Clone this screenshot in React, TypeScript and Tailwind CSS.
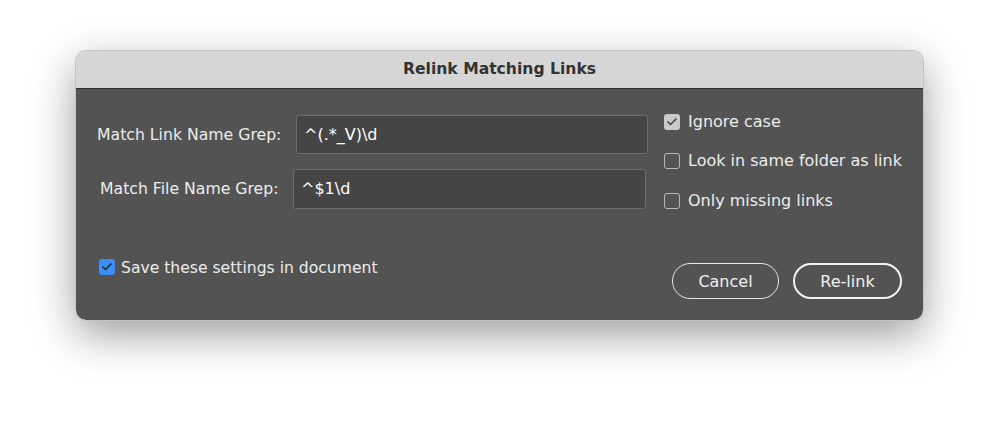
import { Check } from 'lucide-react';

const font = { fontFamily: '"DejaVu Sans", "Liberation Sans", sans-serif' };

function Box({ checked, blue }: { checked?: boolean; blue?: boolean }) {
  if (blue) {
    return (
      <span className="flex h-4 w-4 items-center justify-center rounded-[3px] bg-[#3a8ef5]">
        <Check className="h-3 w-3 text-[#2d2d2d]" strokeWidth={3.5} />
      </span>
    );
  }
  if (checked) {
    return (
      <span className="flex h-4 w-4 items-center justify-center rounded-[3px] bg-[#c9c9c9]">
        <Check className="h-3 w-3 text-[#4a4a4a]" strokeWidth={3.5} />
      </span>
    );
  }
  return <span className="h-4 w-4 rounded-[3px] border border-[#b9b9b9]" />;
}

export default function App() {
  return (
    <div
      className="h-[421px] w-[999px] bg-white pl-[76px] pt-[51px]"
      style={font}
    >
      <div className="flex h-[269px] w-[847px] flex-col overflow-hidden rounded-[10px] shadow-[0_14px_44px_rgba(0,0,0,0.4)] outline outline-1 outline-[#c4c4c4]">
        {/* Title bar */}
        <div className="flex h-[38px] items-center justify-center border-b border-[#2f2f2f] bg-[#d6d6d6]">
          <span className="text-[15.6px] font-bold text-[#333333]">Relink Matching Links</span>
        </div>

        {/* Body */}
        <div className="flex flex-1 flex-col bg-[#535353] text-[15.7px] text-[#ececec]">
          <div className="flex pt-[26px]">
            <div className="flex flex-col gap-[15px]">
              <div className="ml-[21px] flex items-center">
                <span className="w-[199px]">Match Link Name Grep:</span>
                <div className="flex h-[39px] w-[352px] items-center rounded-[3px] border border-[#6c6c6c] bg-[#454545] px-[7px] text-[16px] text-white">
                  ^(.*_V)\d
                </div>
              </div>
              <div className="ml-[24px] flex items-center">
                <span className="w-[193px]">Match File Name Grep:</span>
                <div className="flex h-[40px] w-[353px] items-center rounded-[3px] border border-[#6c6c6c] bg-[#454545] px-[7px] text-[16px] text-white">
                  ^$1\d
                </div>
              </div>
            </div>

            <div className="-mt-[3px] ml-[16px] flex flex-col gap-[20.5px]">
              <label className="flex h-[19px] items-center gap-[8px]">
                <Box checked />
                <span className="text-[16px]">Ignore case</span>
              </label>
              <label className="flex h-[19px] items-center gap-[8px]">
                <Box />
                <span className="text-[16px]">Look in same folder as link</span>
              </label>
              <label className="flex h-[19px] items-center gap-[8px]">
                <Box />
                <span className="text-[16px]">Only missing links</span>
              </label>
            </div>
          </div>

          <div className="mt-auto flex items-end justify-between pb-[21px] pl-[23px] pr-[21px]">
            <label className="mb-[19px] flex items-center gap-[6px]">
              <Box blue />
              <span className="pt-[2px] text-[15.6px]">Save these settings in document</span>
            </label>
            <div className="flex gap-[14px]">
              <button className="h-[36px] w-[107px] rounded-full border-[1.5px] border-[#e6e6e6] pt-[2px] text-[16px] text-[#f0f0f0]">
                Cancel
              </button>
              <button className="h-[36px] w-[109px] rounded-full border-[2.5px] border-[#f2f2f2] pt-[2px] text-[16px] text-[#f0f0f0]">
                Re-link
              </button>
            </div>
          </div>
        </div>
      </div>
    </div>
  );
}
